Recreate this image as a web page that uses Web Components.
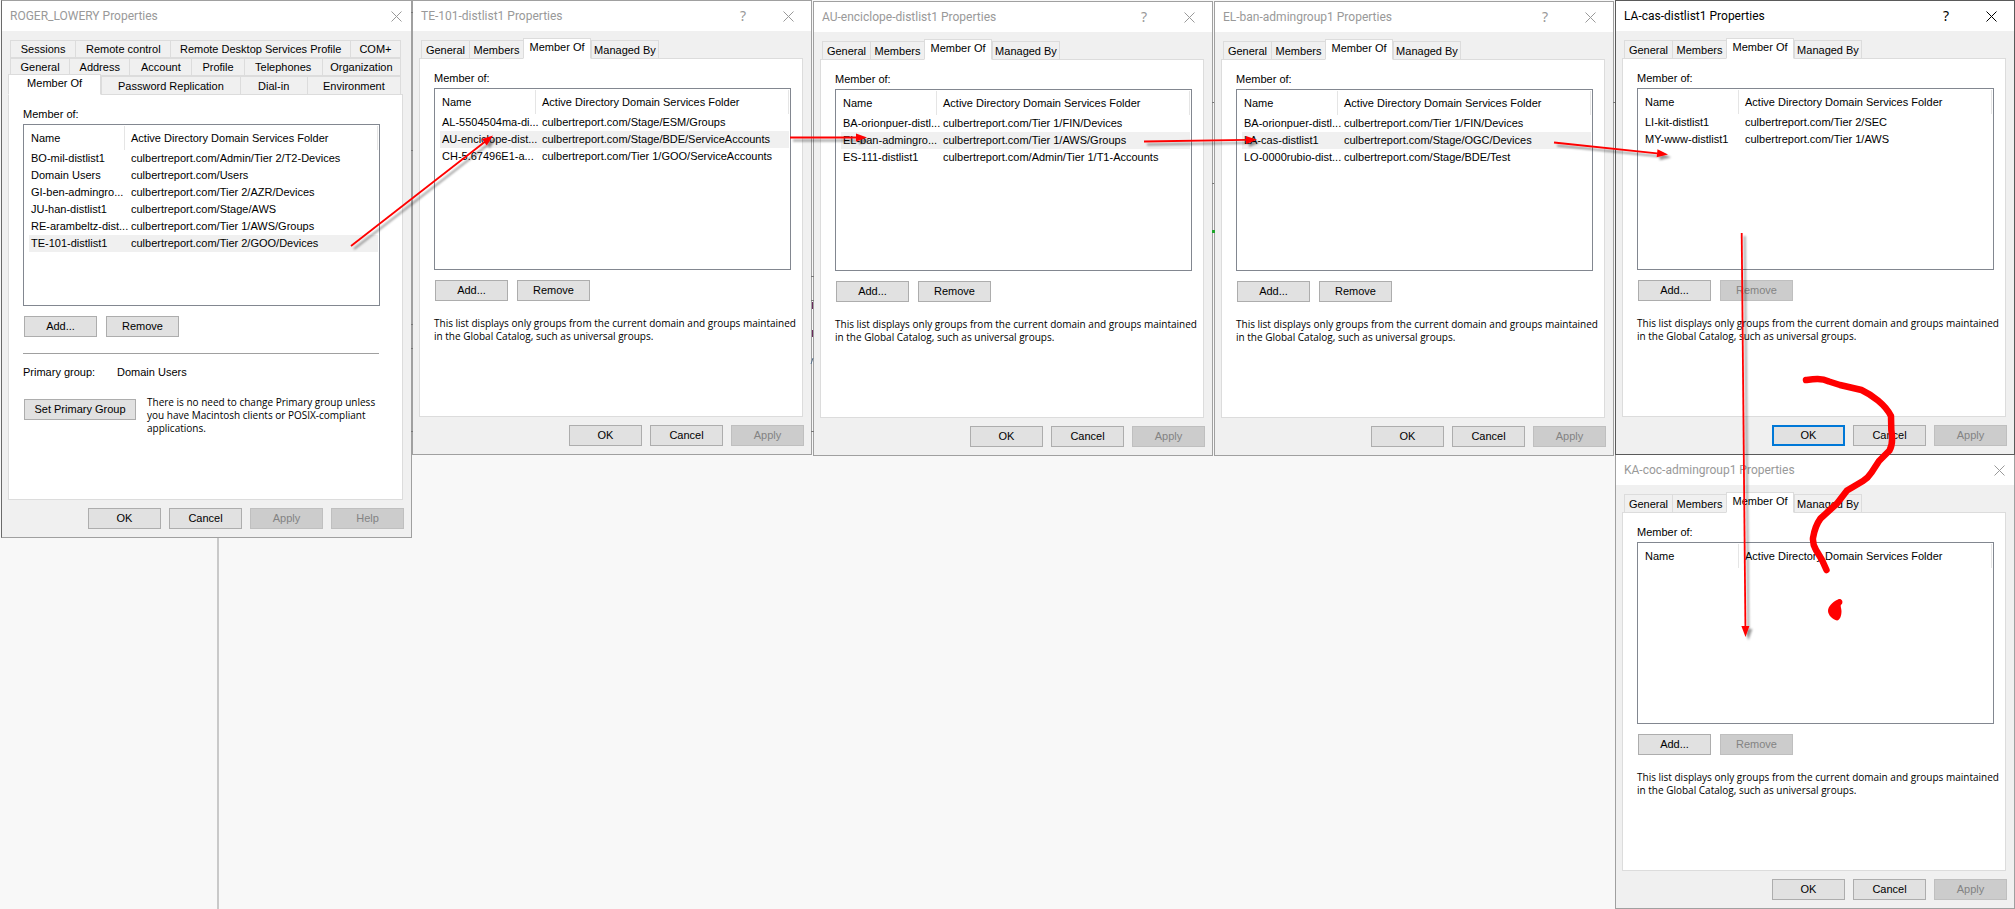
<!DOCTYPE html>
<html lang="en">
<head>
<meta charset="utf-8">
<title>Group membership chain</title>
<style>
  html, body { margin: 0; }
  body { font: 11px/13px "Liberation Sans", Arial, sans-serif; color: #000; background: #f8f8f8; }
</style>
</head>
<body>
<desk-top>
  <props-window caption="ROGER_LOWERY Properties" class="user">
    <tab-strip slot="tabs">
      <tab-row><tab-item grow="65">Sessions</tab-item><tab-item grow="95">Remote control</tab-item><tab-item grow="179">Remote Desktop Services Profile</tab-item><tab-item grow="51">COM+</tab-item></tab-row>
      <tab-row><tab-item grow="59">General</tab-item><tab-item grow="60">Address</tab-item><tab-item grow="62">Account</tab-item><tab-item grow="52">Profile</tab-item><tab-item grow="78">Telephones</tab-item><tab-item grow="79">Organization</tab-item></tab-row>
      <tab-row><tab-item grow="91" selected>Member Of</tab-item><tab-item grow="138">Password Replication</tab-item><tab-item grow="67">Dial-in</tab-item><tab-item grow="94">Environment</tab-item></tab-row>
    </tab-strip>
    <group-list>
      <group-entry name="BO-mil-distlist1" folder="culbertreport.com/Admin/Tier 2/T2-Devices"></group-entry>
      <group-entry name="Domain Users" folder="culbertreport.com/Users"></group-entry>
      <group-entry name="GI-ben-admingro..." folder="culbertreport.com/Tier 2/AZR/Devices"></group-entry>
      <group-entry name="JU-han-distlist1" folder="culbertreport.com/Stage/AWS"></group-entry>
      <group-entry name="RE-arambeltz-dist..." folder="culbertreport.com/Tier 1/AWS/Groups"></group-entry>
      <group-entry name="TE-101-distlist1" folder="culbertreport.com/Tier 2/GOO/Devices" selected></group-entry>
    </group-list>
    <list-actions><win-button>Add...</win-button><win-button>Remove</win-button></list-actions>
    <primary-group value="Domain Users">There is no need to change Primary group unless you have Macintosh clients or POSIX-compliant applications.</primary-group>
    <win-button slot="footer">OK</win-button>
    <win-button slot="footer">Cancel</win-button>
    <win-button slot="footer" disabled>Apply</win-button>
    <win-button slot="footer" disabled>Help</win-button>
  </props-window>

  <group-window caption="TE-101-distlist1 Properties" help>
    <group-entry name="AL-5504504ma-di..." folder="culbertreport.com/Stage/ESM/Groups"></group-entry>
    <group-entry name="AU-enciclope-dist..." folder="culbertreport.com/Stage/BDE/ServiceAccounts" selected></group-entry>
    <group-entry name="CH-5.67496E1-a..." folder="culbertreport.com/Tier 1/GOO/ServiceAccounts"></group-entry>
  </group-window>

  <group-window caption="AU-enciclope-distlist1 Properties" help class="low">
    <group-entry name="BA-orionpuer-distl..." folder="culbertreport.com/Tier 1/FIN/Devices"></group-entry>
    <group-entry name="EL-ban-admingro..." folder="culbertreport.com/Tier 1/AWS/Groups" selected></group-entry>
    <group-entry name="ES-111-distlist1" folder="culbertreport.com/Admin/Tier 1/T1-Accounts"></group-entry>
  </group-window>

  <group-window caption="EL-ban-admingroup1 Properties" help class="low">
    <group-entry name="BA-orionpuer-distl..." folder="culbertreport.com/Tier 1/FIN/Devices"></group-entry>
    <group-entry name="LA-cas-distlist1" folder="culbertreport.com/Stage/OGC/Devices" selected></group-entry>
    <group-entry name="LO-0000rubio-dist..." folder="culbertreport.com/Stage/BDE/Test"></group-entry>
  </group-window>

  <window-stack>
    <group-window caption="LA-cas-distlist1 Properties" help active locked>
      <group-entry name="LI-kit-distlist1" folder="culbertreport.com/Tier 2/SEC"></group-entry>
      <group-entry name="MY-www-distlist1" folder="culbertreport.com/Tier 1/AWS"></group-entry>
    </group-window>
    <group-window caption="KA-coc-admingroup1 Properties" locked></group-window>
  </window-stack>

  <path-marks slot="marks"></path-marks>
</desk-top>

<script>
const shadow = (el, html) => { el.attachShadow({ mode: "open" }).innerHTML = html; return el.shadowRoot; };

customElements.define("desk-top", class extends HTMLElement {
  constructor() {
    super();
    shadow(this, `<style>
      :host { display: block; position: relative; min-height: 100vh; overflow: hidden; background: #f8f8f8; }
      .pane { position: absolute; inset: 0 auto 0 0; width: 217px; border-right: 2px solid #c9c9c9; }
      main { position: relative; isolation: isolate; display: grid; align-items: start;
             grid-template-columns: minmax(0, 412fr) repeat(3, minmax(0, 401fr)) minmax(0, 400fr); }
      ::slotted(.user) { margin-left: 1px; --window-height: 538px; --panel-end: 22px; }
      ::slotted(group-window) { margin-right: 1px; }
      ::slotted(.low) { margin-top: 1px; }
    </style><div class="pane"></div><main><slot></slot></main><slot name="marks"></slot>`);
  }
});

customElements.define("window-stack", class extends HTMLElement {
  constructor() {
    super();
    shadow(this, `<style>
      :host { display: flex; flex-direction: column; }
      ::slotted([active]) { position: relative; z-index: 1; margin-bottom: -1px; }
    </style><slot></slot>`);
  }
});

customElements.define("props-window", class extends HTMLElement {
  connectedCallback() {
    if (this.shadowRoot) return;
    const help = this.hasAttribute("help") ? `<button class="tool" aria-label="Help">?</button>` : "";
    shadow(this, `<style>
      :host { display: flex; flex-direction: column; box-sizing: border-box; min-height: var(--window-height, 455px);
              border: 1px solid #a0a0a0; background: #f0f0f0; color: #000; }
      :host(.user) { border-left-color: #6a6a6a; }
      :host([active]) { border-color: #5a5a5a; }
      header { display: flex; align-items: center; height: 30px; box-sizing: border-box; padding: 0 2px 0 8px;
               background: #fff; color: #999; font: 12px/16px Roboto, "Noto Sans", sans-serif; }
      :host([help]) header { padding-right: 10px; }
      :host([active]) header { color: #000; }
      h1 { flex: 1; margin: 0; font: inherit; white-space: nowrap; }
      .tool { display: grid; place-items: center; width: 26px; height: 26px; margin: 0; padding: 0; border: 0;
              background: none; color: inherit; font: 14px/16px "Noto Sans", sans-serif; }
      .tools { display: flex; gap: 19px; }
      section { flex: 1; display: flex; flex-direction: column; padding: 9px 8px 8px 6px; }
      .panel { flex: 1; border: 1px solid #dcdcdc; background: #fff; padding: 13px var(--panel-end, 11px) 0 14px; }
      footer { display: flex; justify-content: flex-end; gap: 8px; padding: 8px 0 0; margin-right: -1px; }
    </style>
    <header><h1>${this.getAttribute("caption")}</h1><span class="tools">${help}<button class="tool" aria-label="Close"><svg width="11" height="11" viewBox="0 0 11 11" fill="none" stroke="currentColor"><path d="M.5 .5l10 10M10.5 .5l-10 10"/></svg></button></span></header>
    <section><slot name="tabs"></slot><div class="panel"><slot></slot></div><footer><slot name="footer"></slot></footer></section>`);
  }
});

customElements.define("tab-strip", class extends HTMLElement {
  constructor() {
    super();
    shadow(this, `<style>
      :host { display: block; padding: 0 2px; }
      ::slotted(tab-row:last-child) { margin-bottom: -1px; }
    </style><div role="tablist"><slot></slot></div>`);
  }
});

customElements.define("tab-row", class extends HTMLElement {
  constructor() {
    super();
    shadow(this, `<style>:host { display: flex; height: 18px; }
      :host(:last-child) { height: 19px; }</style><slot></slot>`);
  }
});

customElements.define("tab-item", class extends HTMLElement {
  connectedCallback() {
    if (this.shadowRoot) return;
    const grow = this.getAttribute("grow"), width = this.getAttribute("width");
    shadow(this, `<style>
      :host { display: flex; ${grow ? `flex: ${grow} 1 0;` : `flex: 0 0 ${width}px;`} min-width: 0; }
      button { flex: 1; min-width: 0; margin: 0 -1px 0 0; padding: 1px 0 0; border: 1px solid #dcdcdc; background: #f0f0f0;
               color: inherit; font: inherit; white-space: nowrap; border-radius: 0; }
      :host(:last-child) button { margin-right: 0; }
      :host([selected]) { position: relative; z-index: 1; margin-top: -2px; }
      :host([selected]) button { margin-right: 0; padding: 0 0 2px; background: #fff; border-bottom-color: #fff; }
      :host([selected][grow]) button { margin-left: -2px; }
    </style><button role="tab" aria-selected="${this.hasAttribute("selected")}"><slot></slot></button>`);
  }
});

customElements.define("win-button", class extends HTMLElement {
  connectedCallback() {
    if (this.shadowRoot) return;
    shadow(this, `<style>
      :host { display: block; width: 73px; }
      :host([wide]) { width: 112px; }
      button { display: block; width: 100%; height: 21px; padding: 0; border: 1px solid #adadad; border-radius: 0;
               background: #e1e1e1; color: #000; font: inherit; }
      button:disabled { border-color: #bfbfbf; background: #ccc; color: #838383; }
      :host([primary]) button { border: 2px solid #0078d7; }
    </style><button ${this.hasAttribute("disabled") ? "disabled" : ""}><slot></slot></button>`);
  }
});

customElements.define("list-actions", class extends HTMLElement {
  constructor() {
    super();
    shadow(this, `<style>:host { display: flex; gap: 9px; padding: 10px 0 0 1px; }</style><slot></slot>`);
  }
});

customElements.define("group-list", class extends HTMLElement {
  connectedCallback() {
    if (this.shadowRoot) return;
    const rows = [...this.querySelectorAll("group-entry")].map(e =>
      `<tr${e.hasAttribute("selected") ? ' class="on"' : ""}><td>${e.getAttribute("name")}</td><td>${e.getAttribute("folder")}</td></tr>`).join("");
    shadow(this, `<style>
      :host { display: block; }
      p { margin: 0 0 3px; }
      .box { box-sizing: border-box; height: 182px; padding: 1px 1px 0 5px; border: 1px solid #828790; background: #fff; overflow: hidden; }
      table { width: 100%; table-layout: fixed; border-collapse: separate; border-spacing: 0; text-align: left; }
      th, td { padding: 0 0 0 6px; font-weight: normal; white-space: nowrap; }
      th:first-child, td:first-child { width: 96px; padding-left: 2px; box-sizing: border-box; }
      th { height: 24px; border-right: 1px solid #e5e5e5; }
      td { height: 17px; }
      .on td { background: #f0f0f0; }
    </style><p id="cap">Member of:</p>
    <div class="box"><table aria-labelledby="cap"><thead><tr><th>Name</th><th>Active Directory Domain Services Folder</th></tr></thead><tbody>${rows}</tbody></table></div>`);
  }
});

customElements.define("primary-group", class extends HTMLElement {
  connectedCallback() {
    if (this.shadowRoot) return;
    shadow(this, `<style>
      :host { display: block; }
      hr { margin: 16px 1px 12px 0; border: 0; border-top: 1px solid #a0a0a0; }
      dl { display: grid; grid-template-columns: 94px 1fr; margin: 0 0 17px; }
      dd { margin: 0; }
      .row { display: flex; align-items: flex-start; gap: 11px; margin-right: -12px; padding-left: 1px; }
      win-button { flex: none; margin-top: 3px; }
      p { margin: 0; font: 10px/13px "Open Sans", "Liberation Sans", sans-serif; }
    </style><hr><dl><dt>Primary group:</dt><dd>${this.getAttribute("value")}</dd></dl>
    <div class="row"><win-button wide>Set Primary Group</win-button><p><slot></slot></p></div>`);
  }
});

/* A property sheet for a group: fixed tabs, one membership list, a note. */
customElements.define("group-window", class extends HTMLElement {
  connectedCallback() {
    if (this.shadowRoot) return;
    const flag = n => this.hasAttribute(n) ? n : "";
    const entries = [...this.querySelectorAll("group-entry")].map(e => e.outerHTML).join("");
    shadow(this, `<style>
      :host { display: block; }
      .note { margin: 16px 0 0; white-space: nowrap; font: 10px/13px "Open Sans", "Liberation Sans", sans-serif; }
    </style>
    <props-window caption="${this.getAttribute("caption")}" ${flag("help")} ${flag("active")}>
      <tab-strip slot="tabs"><tab-row><tab-item width="48">General</tab-item><tab-item width="54">Members</tab-item><tab-item width="68" selected>Member Of</tab-item><tab-item width="68">Managed By</tab-item></tab-row></tab-strip>
      <group-list>${entries}</group-list>
      <list-actions><win-button>Add...</win-button><win-button ${this.hasAttribute("locked") ? "disabled" : ""}>Remove</win-button></list-actions>
      <p class="note">This list displays only groups from the current domain and groups maintained<br>in the Global Catalog, such as universal groups.</p>
      <win-button slot="footer" ${this.hasAttribute("active") ? "primary" : ""}>OK</win-button>
      <win-button slot="footer">Cancel</win-button>
      <win-button slot="footer" disabled>Apply</win-button>
    </props-window>`);
  }
});

/* Red arrows and the hand-drawn question mark laid over the windows. */
customElements.define("path-marks", class extends HTMLElement {
  constructor() {
    super();
    const arrow = (x1, y1, x2, y2) => {
      const a = Math.atan2(y2 - y1, x2 - x1), c = Math.cos(a), s = Math.sin(a);
      const bx = x2 - 11 * c, by = y2 - 11 * s;
      return `<path d="M${x1} ${y1}L${bx} ${by}" stroke="red" stroke-width="1.8" fill="none"/>
        <path d="M${x2} ${y2}L${bx - 4 * s} ${by + 4 * c}L${bx + 4 * s} ${by - 4 * c}Z" fill="red"/>`;
    };
    shadow(this, `<style>
      :host { position: absolute; inset: 0; pointer-events: none; }
      svg { display: block; width: 100%; height: 100%; }
    </style><svg viewBox="0 0 2015 909" preserveAspectRatio="none" aria-hidden="true">
      <defs><filter id="s" filterUnits="userSpaceOnUse" x="0" y="0" width="2015" height="909"><feDropShadow dx="3" dy="3" stdDeviation="1.3" flood-color="#000" flood-opacity=".4"/></filter></defs>
      <path d="M1212 230h3v3h-3z" fill="#1fa52c"/>
      <path d="M811 276h3v1h-3zM811 300h3v1h-3zM811 431h3v1h-3zM411 12h2v1h-2zM411 150h2v1h-2zM411 324h2v1h-2zM411 348h2v1h-2zM411 431h2v1h-2zM1212 102h2v1h-2zM1212 183h2v1h-2zM1613 102h2v1h-2z" fill="#777"/>
      <path d="M812 302h1v7h-1zM812 330h1v7h-1z" fill="#6a2a5c"/><path d="M811 364l2-6" stroke="#55708c" fill="none"/>
      <g filter="url(#s)">
      ${arrow(351, 246, 493, 135.5)}${arrow(790, 137.5, 867, 137.5)}${arrow(1144, 141.5, 1257, 139.8)}${arrow(1554, 142.5, 1668, 154.5)}${arrow(1741.7, 233, 1745.5, 637)}
      </g>
      <path d="M1806 380C1814 379 1821 378 1829 381.500L1840 385L1861.500 390Q1870 394 1878 400.500Q1887 408 1891 416L1891.300 430C1893 440 1892 446 1889.500 450.500L1879 461L1871.500 472.500Q1868 478 1863 481L1847 490.500L1837 503.500L1820.500 518.500Q1815 526 1813 538Q1812.500 544 1816 550L1822 560L1826.500 570" fill="none" stroke="red" stroke-width="6.500" stroke-linecap="round" stroke-linejoin="round"/>
      <path d="M1838 599.500C1841 598 1843.500 601 1842 604C1839.500 605 1841.500 608 1841.500 611C1841.500 616 1840 620 1837 620.500C1833 620 1828 615 1828 611C1828 607 1832 602 1838 599.500Z" fill="red"/>
    </svg>`);
  }
});
</script>
</body>
</html>
